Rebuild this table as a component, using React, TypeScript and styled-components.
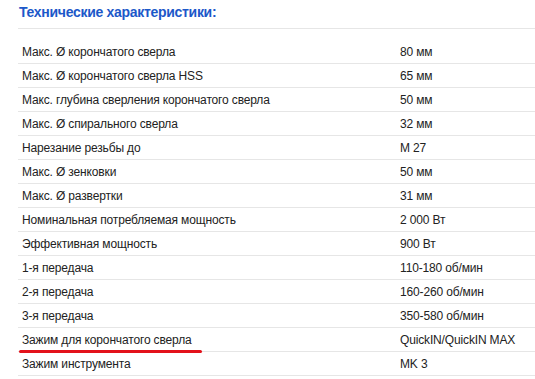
import styled, { createGlobalStyle } from 'styled-components';

const GlobalStyle = createGlobalStyle`
  html, body {
    margin: 0;
    padding: 0;
    background: #fff;
  }
  body {
    font-family: "Liberation Sans", Arial, sans-serif;
    color: #222;
  }
`;

const specs: [string, string][] = [
  ['Макс. Ø корончатого сверла', '80 мм'],
  ['Макс. Ø корончатого сверла HSS', '65 мм'],
  ['Макс. глубина сверления корончатого сверла', '50 мм'],
  ['Макс. Ø спирального сверла', '32 мм'],
  ['Нарезание резьбы до', 'M 27'],
  ['Макс. Ø зенковки', '50 мм'],
  ['Макс. Ø развертки', '31 мм'],
  ['Номинальная потребляемая мощность', '2 000 Вт'],
  ['Эффективная мощность', '900 Вт'],
  ['1-я передача', '110-180 об/мин'],
  ['2-я передача', '160-260 об/мин'],
  ['3-я передача', '350-580 об/мин'],
  ['Зажим для корончатого сверла', 'QuickIN/QuickIN MAX'],
  ['Зажим инструмента', 'MK 3'],
];

export default function App() {
  return (
    <>
      <GlobalStyle />
      <Section>
        <Heading>Технические характеристики:</Heading>
        <Table>
          {specs.map(([label, value], i) => (
            <Row key={i}>
              <Label>{label}</Label>
              <Value>{value}</Value>
              {i === 12 && <Underline />}
            </Row>
          ))}
        </Table>
      </Section>
    </>
  );
}

const Section = styled.div`
  padding-left: 18px;
  width: 517px;
`;

const Heading = styled.h2`
  margin: 0;
  padding: 4px 0 0 1px;
  height: 24px;
  font-size: 14px;
  font-weight: bold;
  line-height: 16px;
  letter-spacing: -0.3px;
  color: #1c58c9;
  border-bottom: 1px solid #e6e6e6;
  box-sizing: content-box;
`;

const Table = styled.div`
  margin-top: 11px;
`;

const Row = styled.div`
  position: relative;
  display: grid;
  grid-template-columns: 382px 1fr;
  align-items: center;
  height: 23px;
  padding-top: 1px;
  box-sizing: border-box;
  height: 24px;
  border-bottom: 1px solid #e6e6e6;
  font-size: 12px;
  letter-spacing: -0.15px;
  color: #222;
`;

const Label = styled.div`
  padding-left: 4px;
  white-space: nowrap;
`;

const Value = styled.div`
  white-space: nowrap;
`;

const Underline = styled.div`
  position: absolute;
  left: 1px;
  bottom: -2px;
  width: 183px;
  height: 3px;
  border-radius: 2px;
  background: #e3121b;
`;
